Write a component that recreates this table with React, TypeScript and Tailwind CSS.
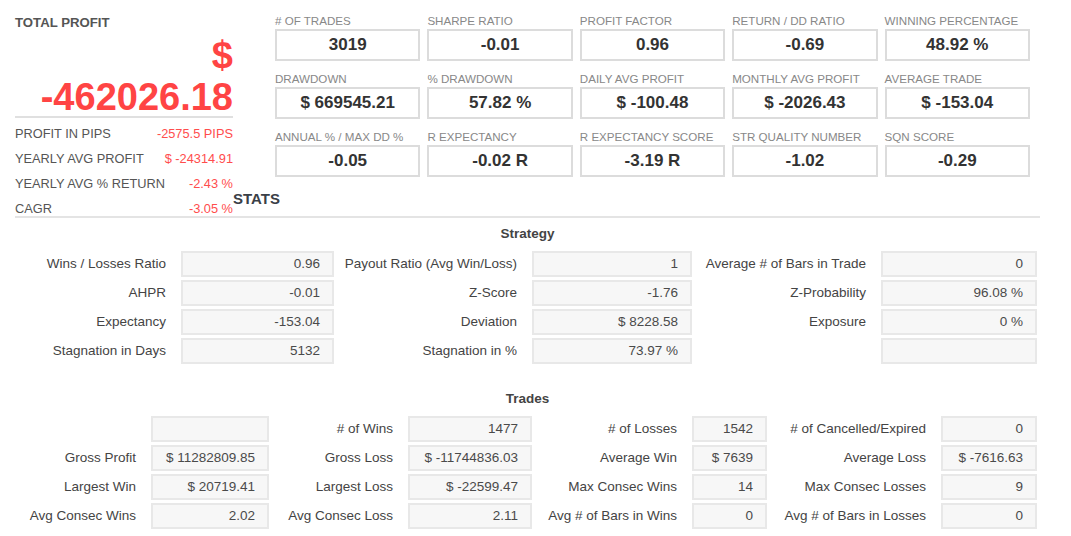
const font = { fontFamily: '"Liberation Sans", Arial, sans-serif' };

const summary = [
  [
    { label: "# OF TRADES", value: "3019" },
    { label: "SHARPE RATIO", value: "-0.01" },
    { label: "PROFIT FACTOR", value: "0.96" },
    { label: "RETURN / DD RATIO", value: "-0.69" },
    { label: "WINNING PERCENTAGE", value: "48.92 %" },
  ],
  [
    { label: "DRAWDOWN", value: "$ 669545.21" },
    { label: "% DRAWDOWN", value: "57.82 %" },
    { label: "DAILY AVG PROFIT", value: "$ -100.48" },
    { label: "MONTHLY AVG PROFIT", value: "$ -2026.43" },
    { label: "AVERAGE TRADE", value: "$ -153.04" },
  ],
  [
    { label: "ANNUAL % / MAX DD %", value: "-0.05" },
    { label: "R EXPECTANCY", value: "-0.02 R" },
    { label: "R EXPECTANCY SCORE", value: "-3.19 R" },
    { label: "STR QUALITY NUMBER", value: "-1.02" },
    { label: "SQN SCORE", value: "-0.29" },
  ],
];

const profitRows = [
  { label: "PROFIT IN PIPS", value: "-2575.5 PIPS" },
  { label: "YEARLY AVG PROFIT", value: "$ -24314.91" },
  { label: "YEARLY AVG % RETURN", value: "-2.43 %" },
  { label: "CAGR", value: "-3.05 %" },
];

// each row: [label, value] pairs, one pair per column group
const strategy = [
  ["Wins / Losses Ratio", "0.96", "Payout Ratio (Avg Win/Loss)", "1", "Average # of Bars in Trade", "0"],
  ["AHPR", "-0.01", "Z-Score", "-1.76", "Z-Probability", "96.08 %"],
  ["Expectancy", "-153.04", "Deviation", "$ 8228.58", "Exposure", "0 %"],
  ["Stagnation in Days", "5132", "Stagnation in %", "73.97 %", "", ""],
];

const trades = [
  ["", "", "# of Wins", "1477", "# of Losses", "1542", "# of Cancelled/Expired", "0"],
  ["Gross Profit", "$ 11282809.85", "Gross Loss", "$ -11744836.03", "Average Win", "$ 7639", "Average Loss", "$ -7616.63"],
  ["Largest Win", "$ 20719.41", "Largest Loss", "$ -22599.47", "Max Consec Wins", "14", "Max Consec Losses", "9"],
  ["Avg Consec Wins", "2.02", "Avg Consec Loss", "2.11", "Avg # of Bars in Wins", "0", "Avg # of Bars in Losses", "0"],
];

function StatTable({ title, rows, cols }: { title: string; rows: string[][]; cols: string }) {
  return (
    <section>
      <h3 className="text-center text-[13.5px] leading-4 font-bold text-[#444]">{title}</h3>
      <div className={`grid ${cols} gap-x-[7px] gap-y-[3px] mt-[9px]`}>
        {rows.flatMap((row, r) =>
          row.map((cell, c) =>
            c % 2 === 0 ? (
              <div key={`${r}-${c}`} className="h-[26px] flex items-center justify-end pr-[8px] text-[13.5px] text-[#444] whitespace-nowrap">
                {cell}
              </div>
            ) : (
              <div
                key={`${r}-${c}`}
                className="h-[26px] flex items-center justify-end pr-[12px] bg-[#f7f7f7] border-2 border-[#e8e8e8] text-[13.5px] text-[#4a4a4a] whitespace-nowrap"
              >
                {cell}
              </div>
            )
          )
        )}
      </div>
    </section>
  );
}

export default function App() {
  return (
    <div className="w-[1071px] h-[536px] bg-white overflow-hidden" style={font}>
      <div className="w-[1025px] ml-[15px]">
        {/* TOP SUMMARY */}
        <div className="flex border-b-2 border-[#e4e4e4]">
          <div className="w-[218px] pt-[15px]">
            <div className="text-[13.2px] leading-4 font-bold text-[#555]">TOTAL PROFIT</div>
            <div className="mt-[5px] text-right text-[38px] leading-[38px] font-bold text-[#ff4444]">$</div>
            <div className="mt-[4px] text-right text-[38px] leading-[38px] font-bold text-[#ff4444] border-b-2 border-[#e0e0e0]">
              -462026.18
            </div>
            <div className="pt-[8px] flex flex-col gap-[10px]">
              {profitRows.map((row) => (
                <div key={row.label} className="flex justify-between text-[12.8px] leading-[15px] whitespace-nowrap">
                  <span className="text-[#555]">{row.label}</span>
                  <span className="text-[#ff4d4d]">{row.value}</span>
                </div>
              ))}
            </div>
          </div>

          <div className="flex-1 flex flex-col pt-[13px]">
            <div className="ml-[42px] w-[755px] grid grid-cols-5 gap-x-[7px] gap-y-[10px]">
              {summary.flat().map((item) => (
                <div key={item.label}>
                  <div className="text-[11.6px] leading-4 text-[#888] whitespace-nowrap">{item.label}</div>
                  <div className="h-[32px] border-2 border-[#dcdcdc] flex items-center justify-center text-[17px] font-bold text-[#333]">
                    {item.value}
                  </div>
                </div>
              ))}
            </div>
            <h2 className="mt-auto pb-[8px] text-[15px] leading-[18px] font-bold text-[#3a4047]">STATS</h2>
          </div>
        </div>

        {/* STRATEGY */}
        <div className="mt-[8px]">
          <StatTable
            title="Strategy"
            rows={strategy}
            cols="grid-cols-[159px_153px_184px_160px_175px_156px]"
          />
        </div>

        {/* TRADES */}
        <div className="mt-[27px]">
          <StatTable
            title="Trades"
            rows={trades}
            cols="grid-cols-[129px_118px_125px_124px_146px_75px_160px_96px]"
          />
        </div>
      </div>
    </div>
  );
}
